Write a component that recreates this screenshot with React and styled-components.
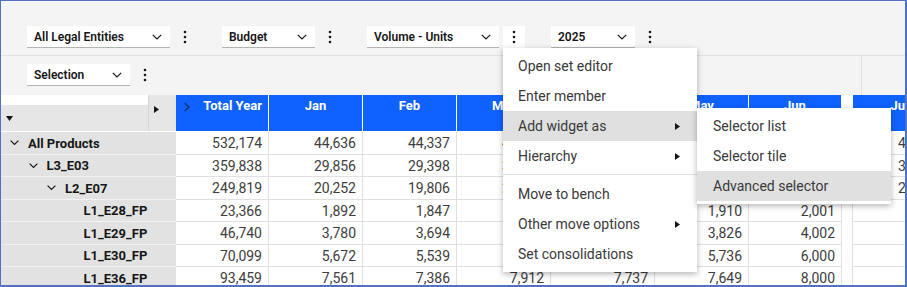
import React from 'react';
import styled, { createGlobalStyle } from 'styled-components';

const GlobalStyle = createGlobalStyle`
  html, body { margin: 0; padding: 0; background: #fff; }
  body { font-family: Roboto, "Liberation Sans", Arial, sans-serif; color: #161616; }
`;

const Frame = styled.div`
  position: relative;
  width: 907px;
  height: 287px;
  box-sizing: border-box;
  border: 1px solid #4f73c0;
  border-right-width: 2px;
  border-bottom-width: 2px;
  background: #f4f4f4;
  overflow: hidden;
  display: flex;
  flex-direction: column;
`;

const ToolbarRow = styled.div`
  display: flex;
  align-items: flex-start;
  box-sizing: border-box;
  height: ${p => p.$h}px;
  padding: ${p => p.$top}px 0 0 26px;
  border-bottom: ${p => (p.$divider ? '1px solid #e0e0e0' : 'none')};
  flex-shrink: 0;
`;

const SidePanel = styled.div`
  margin: -${p => p.$top}px 0 0 auto;
  width: 43px;
  align-self: stretch;
  border-left: 1px solid #e0e0e0;
  height: calc(100% + ${p => p.$top}px);
`;

const Select = styled.div`
  display: flex;
  align-items: center;
  justify-content: space-between;
  box-sizing: border-box;
  width: ${p => p.$w}px;
  height: 22px;
  padding: 0 8px 0 7px;
  background: #fff;
  border-bottom: 1px solid #b4b4b4;
  font-size: 12px;
  font-weight: 600;
  color: #161616;
  white-space: nowrap;
`;

const Kebab = styled.div`
  display: flex;
  align-items: center;
  justify-content: center;
  width: 22px;
  height: 22px;
  margin: 0 26px 0 4px;
  background: ${p => (p.$active ? '#fff' : 'transparent')};
`;

const Grid = styled.div`
  display: grid;
  grid-template-columns: 175px 93px 94px 94px 94px 104px 94px 93px 11px 94px;
  grid-template-rows: 37px;
  grid-auto-rows: 22.5px;
  background: #fff;
  flex-shrink: 0;
`;

const Corner = styled.div`
  display: flex;
  background: #e6e6e6;
  border-bottom: 1px solid #fff;
`;

const CornerMain = styled.div`
  width: 147px;
  display: flex;
  flex-direction: column;
`;

const CornerInput = styled.div`
  height: 10px;
  background: #fff;
`;

const CornerBody = styled.div`
  flex: 1;
  display: flex;
  align-items: center;
  padding-left: 5px;
`;

const CornerSide = styled.div`
  flex: 1;
  border-left: 1px solid #d6d6d6;
  padding: 3px 0 0 5px;
`;

const HeadCell = styled.div`
  display: flex;
  align-items: flex-start;
  justify-content: ${p => (p.$total ? 'space-between' : 'center')};
  box-sizing: border-box;
  padding: 3px ${p => (p.$total ? '6px' : '0')} 0 ${p => (p.$total ? '8px' : '0')};
  background: ${p => (p.$gap ? '#fff' : '#0f62fe')};
  border-right: 1px solid #fff;
  border-bottom: 1px solid #fff;
  color: #fff;
  font-size: 13px;
  font-weight: 700;
  line-height: 16px;
  white-space: nowrap;
  overflow: hidden;
`;

const RowHead = styled.div`
  display: flex;
  align-items: center;
  gap: 9px;
  box-sizing: border-box;
  padding: 1px 0 0 ${p => 9 + p.$level * 18.5}px;
  background: #e2e2e2;
  border-bottom: 1px solid #f2f2f2;
  font-size: 13px;
  font-weight: 700;
  color: #161616;
  white-space: nowrap;
`;

const Cell = styled.div`
  display: flex;
  align-items: center;
  justify-content: flex-end;
  box-sizing: border-box;
  padding: 1px 6px 0 0;
  background: #fff;
  border-right: 1px solid #e0e0e0;
  border-bottom: ${p => (p.$gap ? 'none' : '1px solid #e0e0e0')};
  font-size: 14px;
  color: #3d3d3d;
  white-space: nowrap;
  overflow: hidden;
`;

const Menu = styled.div`
  position: absolute;
  left: ${p => p.$x}px;
  top: ${p => p.$y}px;
  width: 194px;
  box-sizing: border-box;
  padding: 3px 0;
  background: #fff;
  box-shadow: 0 2px 6px rgba(0, 0, 0, 0.3);
  z-index: ${p => p.$z || 2};
`;

const MenuItem = styled.div`
  display: flex;
  align-items: center;
  justify-content: space-between;
  height: 30px;
  padding: 0 17px 0 ${p => p.$pad || 15}px;
  background: ${p => (p.$hot ? '#e0e0e0' : 'transparent')};
  font-size: 14px;
  color: #393939;
  white-space: nowrap;
`;

const Divider = styled.div`
  height: 1px;
  margin: 3px 0 4px;
  background: #e0e0e0;
`;

const Chevron = () => (
  <svg width="10" height="6" viewBox="0 0 10 6">
    <path d="M0.8 0.8 L5 5 L9.2 0.8" fill="none" stroke="#161616" strokeWidth="1.2" />
  </svg>
);

const Dots = () => (
  <svg width="4" height="14" viewBox="0 0 4 14">
    <circle cx="2" cy="2" r="1.3" fill="#161616" />
    <circle cx="2" cy="7" r="1.3" fill="#161616" />
    <circle cx="2" cy="12" r="1.3" fill="#161616" />
  </svg>
);

const TreeChevron = ({ show }) => (
  <svg width="9" height="6" viewBox="0 0 9 6" style={{ visibility: show ? 'visible' : 'hidden' }}>
    <path d="M0.6 0.6 L4.5 4.5 L8.4 0.6" fill="none" stroke="#161616" strokeWidth="1.2" />
  </svg>
);

const Arrow = () => (
  <svg width="5" height="7" viewBox="0 0 5 7">
    <polygon points="0,0 5,3.5 0,7" fill="#161616" />
  </svg>
);

const DownTri = () => (
  <svg width="7" height="5" viewBox="0 0 7 5">
    <polygon points="0,0 7,0 3.5,5" fill="#161616" />
  </svg>
);

const RightTri = () => (
  <svg width="5" height="7" viewBox="0 0 5 7">
    <polygon points="0,0 5,3.5 0,7" fill="#161616" />
  </svg>
);

const selectors = [
  { label: 'All Legal Entities', w: 143 },
  { label: 'Budget', w: 93 },
  { label: 'Volume - Units', w: 132, active: true },
  { label: '2025', w: 84 },
];

const months = ['Jan', 'Feb', 'Mar', 'Apr', 'May', 'Jun', '', 'Jul'];

const rows = [
  { label: 'All Products', level: 0, open: true, vals: ['532,174', '44,636', '44,337', '44,912', '44,208', '44,517', '44,390', '', '44,781'] },
  { label: 'L3_E03', level: 1, open: true, vals: ['359,838', '29,856', '29,398', '30,144', '29,612', '30,027', '30,215', '', '30,402'] },
  { label: 'L2_E07', level: 2, open: true, vals: ['249,819', '20,252', '19,806', '20,388', '20,104', '20,466', '20,731', '', '20,918'] },
  { label: 'L1_E28_FP', level: 3, vals: ['23,366', '1,892', '1,847', '1,958', '1,934', '1,910', '2,001', '', '2,043'] },
  { label: 'L1_E29_FP', level: 3, vals: ['46,740', '3,780', '3,694', '3,915', '3,869', '3,826', '4,002', '', '4,086'] },
  { label: 'L1_E30_FP', level: 3, vals: ['70,099', '5,672', '5,539', '5,871', '5,803', '5,736', '6,000', '', '6,129'] },
  { label: 'L1_E36_FP', level: 3, vals: ['93,459', '7,561', '7,386', '7,912', '7,737', '7,649', '8,000', '', '8,172'] },
];

const menuItems = [
  { label: 'Open set editor' },
  { label: 'Enter member' },
  { label: 'Add widget as', sub: true, hot: true },
  { label: 'Hierarchy', sub: true },
  { divider: true },
  { label: 'Move to bench' },
  { label: 'Other move options', sub: true },
  { label: 'Set consolidations' },
];

const subItems = ['Selector list', 'Selector tile', 'Advanced selector'];

export default function App() {
  return (
    <Frame>
      <GlobalStyle />
      <ToolbarRow $h={55} $top={25} $divider>
        {selectors.map(s => (
          <React.Fragment key={s.label}>
            <Select $w={s.w}>
              {s.label}
              <Chevron />
            </Select>
            <Kebab $active={s.active}>
              <Dots />
            </Kebab>
          </React.Fragment>
        ))}
      </ToolbarRow>
      <ToolbarRow $h={39} $top={8}>
        <Select $w={103}>
          Selection
          <Chevron />
        </Select>
        <Kebab>
          <Dots />
        </Kebab>
        <SidePanel $top={8} />
      </ToolbarRow>
      <Grid>
        <Corner>
          <CornerMain>
            <CornerInput />
            <CornerBody>
              <DownTri />
            </CornerBody>
          </CornerMain>
          <CornerSide>
            <RightTri />
          </CornerSide>
        </Corner>
        <HeadCell $total>
          <svg width="6" height="10" viewBox="0 0 6 10" style={{ marginTop: 4 }}>
            <path d="M0.8 1 L4.8 5 L0.8 9" fill="none" stroke="#1b2c5e" strokeWidth="1.2" />
          </svg>
          Total Year
        </HeadCell>
        {months.map((m, i) => (
          <HeadCell key={i} $gap={m === ''}>
            {m}
          </HeadCell>
        ))}
        {rows.map(r => (
          <React.Fragment key={r.label}>
            <RowHead $level={r.level}>
              <TreeChevron show={r.open} />
              {r.label}
            </RowHead>
            {r.vals.map((v, i) => (
              <Cell key={i} $gap={i === 7}>
                {v}
              </Cell>
            ))}
          </React.Fragment>
        ))}
      </Grid>
      <Menu $x={502} $y={47}>
        {menuItems.map((it, i) =>
          it.divider ? (
            <Divider key={i} />
          ) : (
            <MenuItem key={i} $hot={it.hot}>
              {it.label}
              {it.sub && <Arrow />}
            </MenuItem>
          )
        )}
      </Menu>
      <Menu $x={696} $y={107} $z={3}>
        {subItems.map((s, i) => (
          <MenuItem key={s} $pad={16} $hot={i === 2}>
            {s}
          </MenuItem>
        ))}
      </Menu>
    </Frame>
  );
}
